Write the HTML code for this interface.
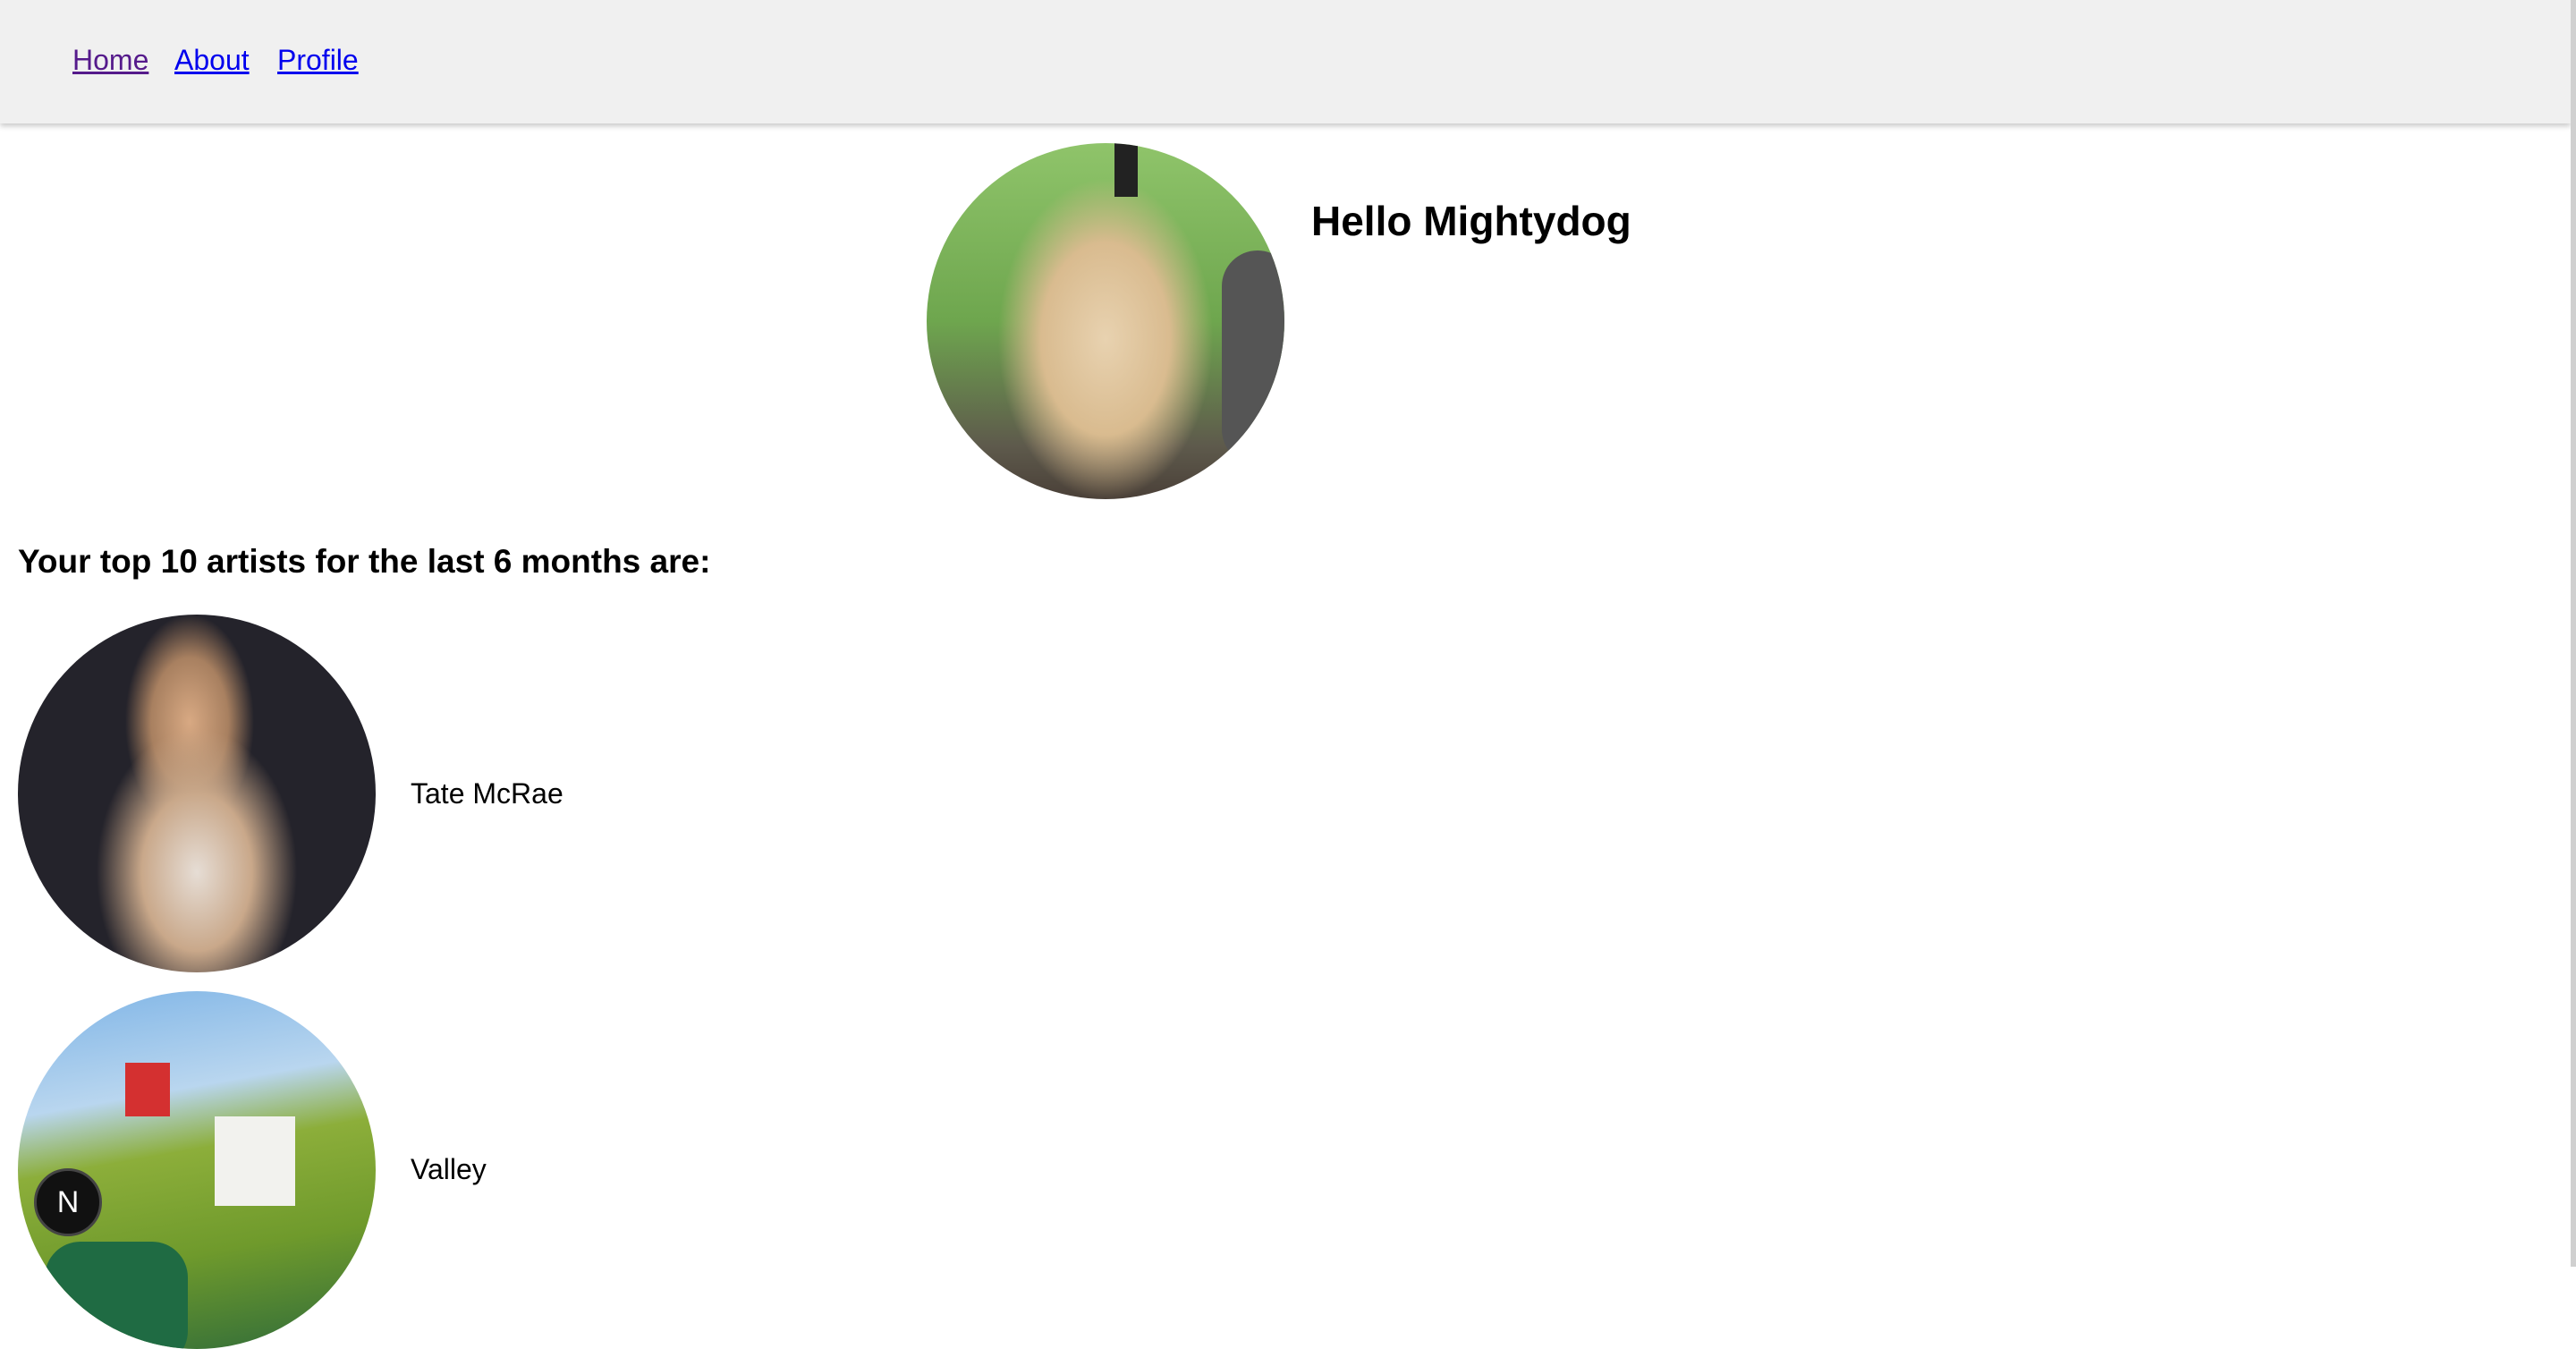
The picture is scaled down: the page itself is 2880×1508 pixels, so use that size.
<!DOCTYPE html>
<html><head><meta charset="utf-8"><style>
html,body{margin:0;padding:0;width:2880px;height:1416px;overflow:hidden;background:#fff;font-family:"Liberation Sans",sans-serif;}
nav{position:absolute;left:0;top:0;width:2874px;height:138px;background:#f0f0f0;box-shadow:0 3px 6px rgba(0,0,0,0.22);}
nav a{position:absolute;top:49px;font-size:32px;color:#0000ee;text-decoration:underline;}
.c{position:absolute;border-radius:50%;overflow:hidden;}
.t{position:absolute;color:#000;white-space:nowrap;}
</style></head><body>
<nav>
<a style="left:81px;color:#551a8b">Home</a>
<a style="left:195px">About</a>
<a style="left:310px">Profile</a>
</nav>
<div class="c" style="left:1036px;top:160px;width:400px;height:398px;background:radial-gradient(ellipse 30% 45% at 50% 55%,#e8d2b0 0%,#d9bb8f 60%,rgba(200,170,120,0) 100%),linear-gradient(180deg,#8fc46a 0%,#6ea64e 50%,#5e5a4c 85%,#4a4038 100%);">
<div style="position:absolute;left:210px;top:0;width:26px;height:60px;background:#222"></div>
<div style="position:absolute;left:330px;top:120px;width:80px;height:240px;background:#555;border-radius:40px"></div>
</div>
<div class="t" style="left:1466px;top:220px;font-size:46px;font-weight:bold">Hello Mightydog</div>
<div class="t" style="left:20px;top:607px;font-size:37px;font-weight:bold">Your top 10 artists for the last 6 months are:</div>
<div class="c" style="left:20px;top:687px;width:400px;height:400px;background:radial-gradient(ellipse 28% 40% at 50% 72%,#e6ddd5 0%,#c9a88a 55%,rgba(0,0,0,0) 100%),radial-gradient(ellipse 18% 30% at 48% 30%,#d8a983 0%,#a88060 60%,rgba(0,0,0,0) 100%),#24232b;"></div>
<div class="t" style="left:459px;top:869px;font-size:32px">Tate McRae</div>
<div class="c" style="left:20px;top:1108px;width:400px;height:400px;background:linear-gradient(170deg,#7eb4e6 0%,#b9d6ef 30%,#8cae3a 45%,#6f9a2c 70%,#2f6b3a 100%);">
<div style="position:absolute;left:120px;top:80px;width:50px;height:60px;background:#d43030"></div>
<div style="position:absolute;left:220px;top:140px;width:90px;height:100px;background:#f2f2ee"></div>
<div style="position:absolute;left:30px;top:280px;width:160px;height:140px;background:#1f6b43;border-radius:40px"></div>
</div>
<div class="t" style="left:459px;top:1289px;font-size:32px">Valley</div>
<div style="position:absolute;left:38px;top:1306px;width:70px;height:70px;border-radius:50%;background:#111;border:3px solid #444;color:#fff;font-size:34px;line-height:70px;text-align:center">N</div>
<div style="position:absolute;left:2874px;top:0;width:6px;height:1416px;background:#d0d0d0"></div>
</body></html>
